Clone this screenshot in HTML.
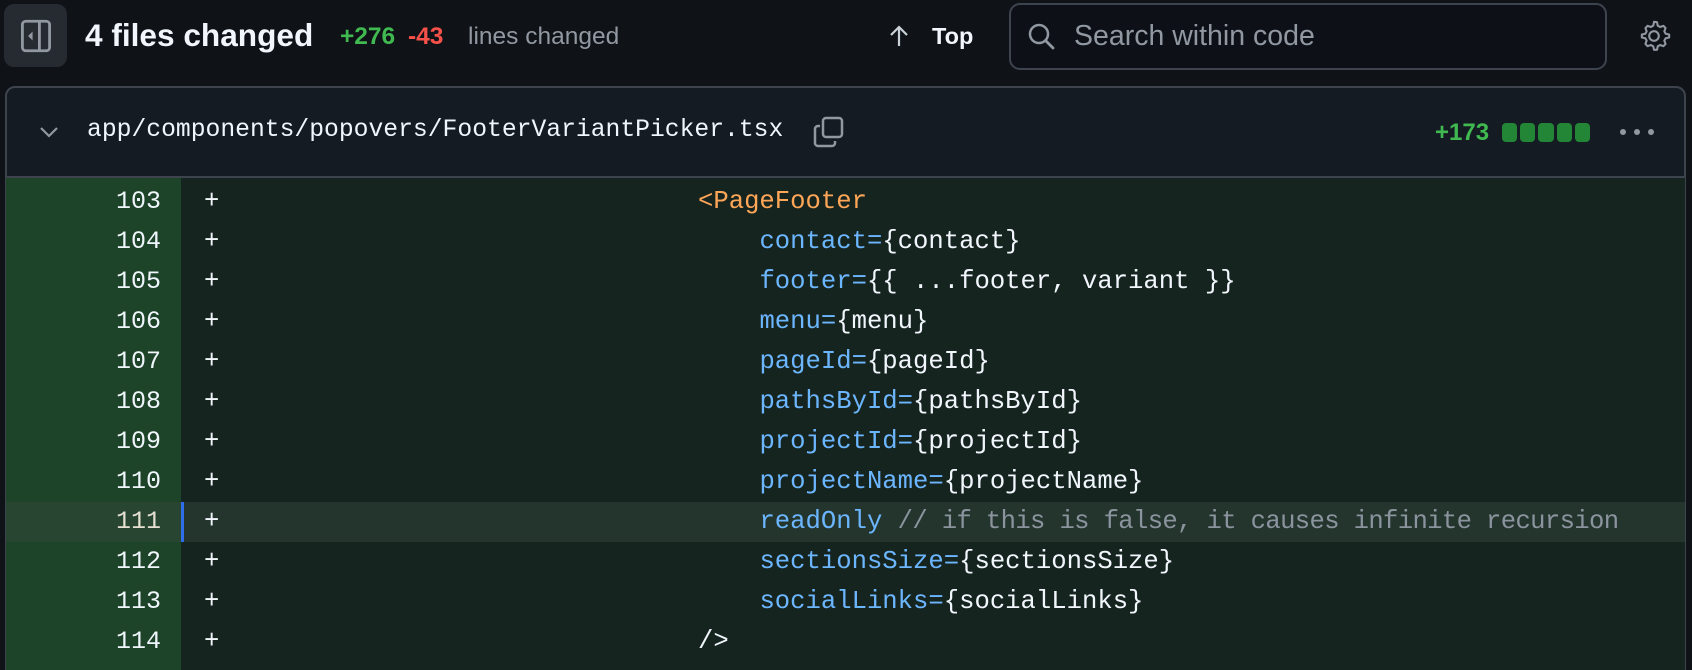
<!DOCTYPE html>
<html><head><meta charset="utf-8"><style>
*{margin:0;padding:0;box-sizing:border-box}
html,body{width:1692px;height:670px;overflow:hidden}
body{background:#0f1217;font-family:"Liberation Sans",sans-serif;color:#e6edf3;position:relative}
.abs{position:absolute}
.mono{font-family:"Liberation Mono",monospace}
.row{position:absolute;left:6px;width:1679px;height:40px}
.num{position:absolute;left:0;width:175px;height:40px;background:#1d4328;text-align:right;padding-right:20px;line-height:40px;font-size:25px;color:#f0f6fc}
.code{position:absolute;left:175px;right:0;height:40px;background:#16241f;line-height:40px;font-size:25.6px;white-space:pre;color:#f0f6fc}
.plus{position:absolute;left:23px}
.c{position:absolute;left:517px}
.a{color:#6cb6ff}.t{color:#ffa657}.g{color:#8b949e;letter-spacing:-0.65px}
</style></head><body>
<div class="abs" style="left:4px;top:4px;width:63px;height:63px;background:#262a31;border-radius:10px"></div>
<svg class="abs" style="left:19px;top:19px" width="34" height="34" viewBox="0 0 30 30"><rect x="3" y="2" width="24" height="26" rx="3" fill="none" stroke="#9198a1" stroke-width="2.5"/><line x1="18" y1="2" x2="18" y2="28" stroke="#9198a1" stroke-width="2.5"/><path d="M12 11 L8 15 L12 19Z" fill="#9198a1"/></svg>
<div class="abs" style="left:85px;top:17px;font-size:31.6px;font-weight:bold;color:#f0f6fc">4 files changed</div>
<div class="abs" style="left:340px;top:23px;font-size:24.5px;font-weight:bold;color:#3fb950">+276</div>
<div class="abs" style="left:408px;top:23px;font-size:24.5px;font-weight:bold;color:#f85149">-43</div>
<div class="abs" style="left:468px;top:23px;font-size:24.5px;color:#9198a1">lines changed</div>
<svg class="abs" style="left:888px;top:24px" width="22" height="24" viewBox="0 0 22 24"><path d="M11 22V3M3 11l8-8 8 8" fill="none" stroke="#c9d1d9" stroke-width="2.2"/></svg>
<div class="abs" style="left:932px;top:23px;font-size:23.5px;font-weight:bold;color:#f0f6fc">Top</div>
<div class="abs" style="left:1009px;top:3px;width:598px;height:67px;border:2px solid #3d444d;border-radius:11px;background:#0d1117"></div>
<svg class="abs" style="left:1027px;top:22px" width="30" height="30" viewBox="0 0 30 30"><circle cx="12" cy="12" r="9" fill="none" stroke="#9198a1" stroke-width="2.5"/><path d="M18.5 18.5L26 26" stroke="#9198a1" stroke-width="2.8" stroke-linecap="round"/></svg>
<div class="abs" style="left:1074px;top:20px;font-size:28.5px;color:#9198a1">Search within code</div>
<svg class="abs" style="left:1636px;top:18px" width="36" height="36" viewBox="0 0 24 24"><path d="M12 2.5l2 .3.5 2.3 1.6.9 2.2-.8 1.4 1.5-.8 2.2.9 1.6 2.3.5v2l-2.3.5-.9 1.6.8 2.2-1.4 1.5-2.2-.8-1.6.9-.5 2.3h-2l-.5-2.3-1.6-.9-2.2.8-1.4-1.5.8-2.2-.9-1.6-2.3-.5v-2l2.3-.5.9-1.6-.8-2.2 1.4-1.5 2.2.8 1.6-.9.5-2.3z" fill="none" stroke="#9198a1" stroke-width="1.4" stroke-linejoin="round"/><circle cx="12" cy="12" r="3.2" fill="none" stroke="#9198a1" stroke-width="1.4"/></svg>
<div class="abs" style="left:5px;top:86px;width:1681px;height:600px;border:2px solid #3d444d;border-radius:10px;background:#151b23"></div>
<div class="abs" style="left:6px;top:176px;width:1679px;height:2px;background:#3d444d"></div>
<svg class="abs" style="left:38px;top:124px" width="22" height="16" viewBox="0 0 22 16"><path d="M3 4l8 8 8-8" fill="none" stroke="#9198a1" stroke-width="2.2"/></svg>
<div class="abs mono" style="left:87px;top:116px;font-size:24.7px;color:#f0f6fc">app/components/popovers/FooterVariantPicker.tsx</div>
<svg class="abs" style="left:812px;top:115px" width="34" height="34" viewBox="0 0 34 34"><rect x="11" y="3" width="19" height="19" rx="3" fill="none" stroke="#9198a1" stroke-width="2.5"/><path d="M8 11H6a3 3 0 0 0-3 3v14a3 3 0 0 0 3 3h14a3 3 0 0 0 3-3v-2" fill="none" stroke="#9198a1" stroke-width="2.5"/></svg>
<div class="abs" style="left:1435px;top:119px;font-size:24px;font-weight:bold;color:#3fb950">+173</div>
<div class="abs" style="left:1502px;top:123px;width:88px;height:19px;display:flex;gap:3px">
<div style="flex:1;background:#238636;border-radius:4px"></div><div style="flex:1;background:#238636;border-radius:4px"></div><div style="flex:1;background:#238636;border-radius:4px"></div><div style="flex:1;background:#238636;border-radius:4px"></div><div style="flex:1;background:#238636;border-radius:4px"></div></div>
<div class="abs" style="left:1620px;top:129px;width:34px;height:6px;display:flex;justify-content:space-between"><i style="width:6px;height:6px;border-radius:3px;background:#9198a1"></i><i style="width:6px;height:6px;border-radius:3px;background:#9198a1"></i><i style="width:6px;height:6px;border-radius:3px;background:#9198a1"></i></div>
<div class="abs" style="left:6px;top:178px;width:175px;height:492px;background:#1d4328"></div>
<div class="abs" style="left:181px;top:178px;width:1504px;height:492px;background:#16241f"></div>

<div class="row mono" style="top:182px"><div class="num">103</div><div class="code"><span class="plus">+</span><span class="c"><span class="t">&lt;PageFooter</span></span></div></div>
<div class="row mono" style="top:222px"><div class="num">104</div><div class="code"><span class="plus">+</span><span class="c">    <span class="a">contact=</span>{contact}</span></div></div>
<div class="row mono" style="top:262px"><div class="num">105</div><div class="code"><span class="plus">+</span><span class="c">    <span class="a">footer=</span>{{ ...footer, variant }}</span></div></div>
<div class="row mono" style="top:302px"><div class="num">106</div><div class="code"><span class="plus">+</span><span class="c">    <span class="a">menu=</span>{menu}</span></div></div>
<div class="row mono" style="top:342px"><div class="num">107</div><div class="code"><span class="plus">+</span><span class="c">    <span class="a">pageId=</span>{pageId}</span></div></div>
<div class="row mono" style="top:382px"><div class="num">108</div><div class="code"><span class="plus">+</span><span class="c">    <span class="a">pathsById=</span>{pathsById}</span></div></div>
<div class="row mono" style="top:422px"><div class="num">109</div><div class="code"><span class="plus">+</span><span class="c">    <span class="a">projectId=</span>{projectId}</span></div></div>
<div class="row mono" style="top:462px"><div class="num">110</div><div class="code"><span class="plus">+</span><span class="c">    <span class="a">projectName=</span>{projectName}</span></div></div>
<div class="row mono" style="top:502px"><div class="num" style="background:#274530;color:#e6e0d2">111</div><div class="code" style="background:#23352d;border-left:3px solid #2f6ee8"><span class="plus" style="left:20px">+</span><span class="c" style="left:514px">    <span class="a">readOnly</span> <span class="g">// if this is false, it causes infinite recursion</span></span></div></div>
<div class="row mono" style="top:542px"><div class="num">112</div><div class="code"><span class="plus">+</span><span class="c">    <span class="a">sectionsSize=</span>{sectionsSize}</span></div></div>
<div class="row mono" style="top:582px"><div class="num">113</div><div class="code"><span class="plus">+</span><span class="c">    <span class="a">socialLinks=</span>{socialLinks}</span></div></div>
<div class="row mono" style="top:622px"><div class="num">114</div><div class="code"><span class="plus">+</span><span class="c">/&gt;</span></div></div>
</body></html>
